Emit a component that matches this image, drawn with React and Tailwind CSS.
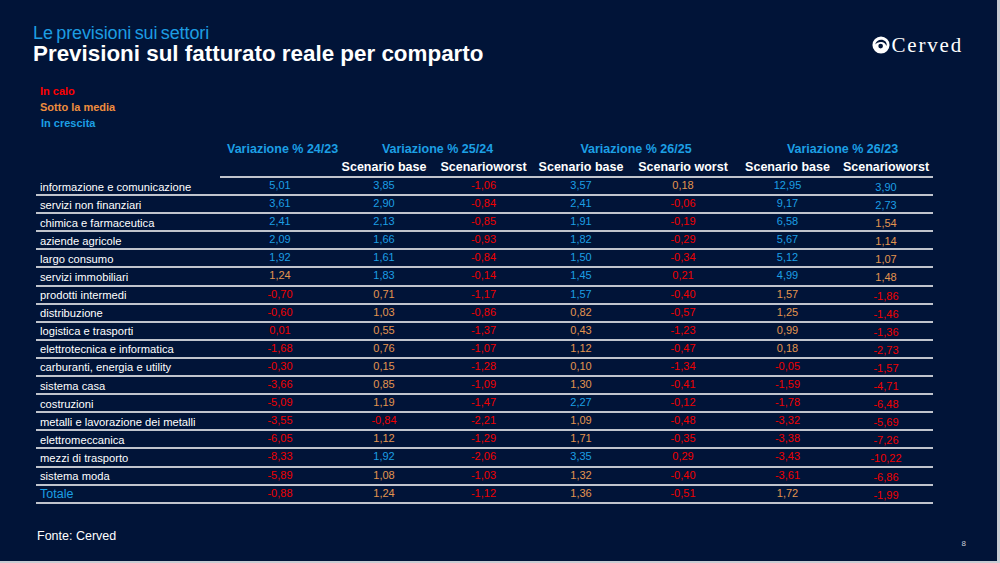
import React from 'react';

const B = 'text-[#1c9fe4]';
const R = 'text-[#f00000]';
const O = 'text-[#e3954f]';

const rows = [
  ['informazione e comunicazione', ['5,01', B], ['3,85', B], ['-1,06', R], ['3,57', B], ['0,18', O], ['12,95', B], ['3,90', B]],
  ['servizi non finanziari', ['3,61', B], ['2,90', B], ['-0,84', R], ['2,41', B], ['-0,06', R], ['9,17', B], ['2,73', B]],
  ['chimica e farmaceutica', ['2,41', B], ['2,13', B], ['-0,85', R], ['1,91', B], ['-0,19', R], ['6,58', B], ['1,54', O]],
  ['aziende agricole', ['2,09', B], ['1,66', B], ['-0,93', R], ['1,82', B], ['-0,29', R], ['5,67', B], ['1,14', O]],
  ['largo consumo', ['1,92', B], ['1,61', B], ['-0,84', R], ['1,50', B], ['-0,34', R], ['5,12', B], ['1,07', O]],
  ['servizi immobiliari', ['1,24', O], ['1,83', B], ['-0,14', R], ['1,45', B], ['0,21', R], ['4,99', B], ['1,48', O]],
  ['prodotti intermedi', ['-0,70', R], ['0,71', O], ['-1,17', R], ['1,57', B], ['-0,40', R], ['1,57', O], ['-1,86', R]],
  ['distribuzione', ['-0,60', R], ['1,03', O], ['-0,86', R], ['0,82', O], ['-0,57', R], ['1,25', O], ['-1,46', R]],
  ['logistica e trasporti', ['0,01', R], ['0,55', O], ['-1,37', R], ['0,43', O], ['-1,23', R], ['0,99', O], ['-1,36', R]],
  ['elettrotecnica e informatica', ['-1,68', R], ['0,76', O], ['-1,07', R], ['1,12', O], ['-0,47', R], ['0,18', O], ['-2,73', R]],
  ['carburanti, energia e utility', ['-0,30', R], ['0,15', O], ['-1,28', R], ['0,10', O], ['-1,34', R], ['-0,05', R], ['-1,57', R]],
  ['sistema casa', ['-3,66', R], ['0,85', O], ['-1,09', R], ['1,30', O], ['-0,41', R], ['-1,59', R], ['-4,71', R]],
  ['costruzioni', ['-5,09', R], ['1,19', O], ['-1,47', R], ['2,27', B], ['-0,12', R], ['-1,78', R], ['-6,48', R]],
  ['metalli e lavorazione dei metalli', ['-3,55', R], ['-0,84', R], ['-2,21', R], ['1,09', O], ['-0,48', R], ['-3,32', R], ['-5,69', R]],
  ['elettromeccanica', ['-6,05', R], ['1,12', O], ['-1,29', R], ['1,71', O], ['-0,35', R], ['-3,38', R], ['-7,26', R]],
  ['mezzi di trasporto', ['-8,33', R], ['1,92', B], ['-2,06', R], ['3,35', B], ['0,29', R], ['-3,43', R], ['-10,22', R]],
  ['sistema moda', ['-5,89', R], ['1,08', O], ['-1,03', R], ['1,32', O], ['-0,40', R], ['-3,61', R], ['-6,86', R]],
  ['Totale', ['-0,88', R], ['1,24', O], ['-1,12', R], ['1,36', O], ['-0,51', R], ['1,72', O], ['-1,99', R]],
];

const cols = 'grid grid-cols-[191px_106px_102px_97px_98px_106px_103px_94px]';

const Logo = () => (
  <div className="flex items-center gap-[2px] mt-[1px]">
    <svg width="18" height="18" viewBox="0 0 20 20">
      <circle cx="10" cy="10" r="9.5" fill="#ffffff" />
      <path d="M3.5 9.5 C4.5 5 9 3.2 12.8 4.6 C16 5.8 17 9 16 11.2 C15 8 12.5 6.6 9.8 6.8 C7 7 5 8.2 3.5 9.5 Z" fill="#011438" />
      <circle cx="9.6" cy="11.2" r="2.6" fill="#011438" />
    </svg>
    <span className="text-white text-[21px] leading-none tracking-[1.8px] font-['Liberation_Serif',serif]">Cerved</span>
  </div>
);

export default function App() {
  return (
    <div className="w-[1000px] h-[563px] bg-[#c9ccd3]">
      <div className="w-[997px] h-[561px] bg-[#011438] font-['Liberation_Sans',Arial,sans-serif] flex flex-col">
        <div className="flex justify-between pl-[33px] pr-[34px] pt-[24px]">
          <div>
            <div className="text-[#1d9de2] text-[18px] leading-[18px] tracking-[-0.1px] [word-spacing:-1.5px]">Le previsioni sui settori</div>
            <div className="text-white text-[22.4px] leading-[22px] font-bold mt-[1px]">Previsioni sul fatturato reale per comparto</div>
          </div>
          <Logo />
        </div>

        <div className="pl-[40px] mt-[18px] text-[11px] leading-[16px] font-bold">
          <div className="text-[#ff0000]">In calo</div>
          <div className="text-[#ef8d3e]">Sotto la media</div>
          <div className="text-[#1c9fe4] pl-[1px]">In crescita</div>
        </div>

        <div className="pl-[36px] mt-[9px] w-[933px]">
          <div className={`${cols} text-[12.5px] leading-[18px] font-bold whitespace-nowrap`}>
            <div />
            <div className="text-center text-[#1c9fe4] pr-[2px]">Variazione % 24/23</div>
            <div className="col-span-2 text-center text-[#1c9fe4] pl-[10px]">Variazione % 25/24</div>
            <div className="col-span-2 text-center text-[#1c9fe4] pl-[4px]">Variazione % 26/25</div>
            <div className="col-span-2 text-center text-[#1c9fe4] pl-[16px]">Variazione % 26/23</div>
          </div>
          <div className={`${cols} text-[12.5px] leading-[18px] font-bold text-white whitespace-nowrap`}>
            <div />
            <div />
            <div className="text-center">Scenario base</div>
            <div className="text-center">Scenarioworst</div>
            <div className="text-center">Scenario base</div>
            <div className="text-center">Scenario worst</div>
            <div className="text-center">Scenario base</div>
            <div className="text-center">Scenarioworst</div>
          </div>
          <div className="ml-[184px] border-b-2 border-[#c0c4cd]" />

          {rows.map(([label, ...vals]) => (
            <div key={label} className={`${cols} h-[18.1px] border-b-2 border-[#c0c4cd] items-start`}>
              {label === 'Totale' ? (
                <div className="pl-[4px] text-[12.5px] leading-[16px] text-[#1c9fe4]">{label}</div>
              ) : (
                <div className="pl-[4px] pt-[0.5px] text-[11.2px] leading-[16px] text-white whitespace-nowrap">{label}</div>
              )}
              {vals.map(([v, c], i) => (
                <div
                  key={i}
                  className={`text-center text-[11px] ${i === 6 ? 'leading-[16px] pt-[1px]' : 'leading-[14px]'} ${c}`}
                >
                  {v}
                </div>
              ))}
            </div>
          ))}
        </div>

        <div className="flex justify-between items-start pl-[37px] pr-[31px] mt-[24px]">
          <div className="text-white text-[12.5px] leading-[16px]">Fonte: Cerved</div>
          <div className="text-[#c9ccd6] text-[8px] leading-[8px] mt-[12px]">8</div>
        </div>
      </div>
    </div>
  );
}
